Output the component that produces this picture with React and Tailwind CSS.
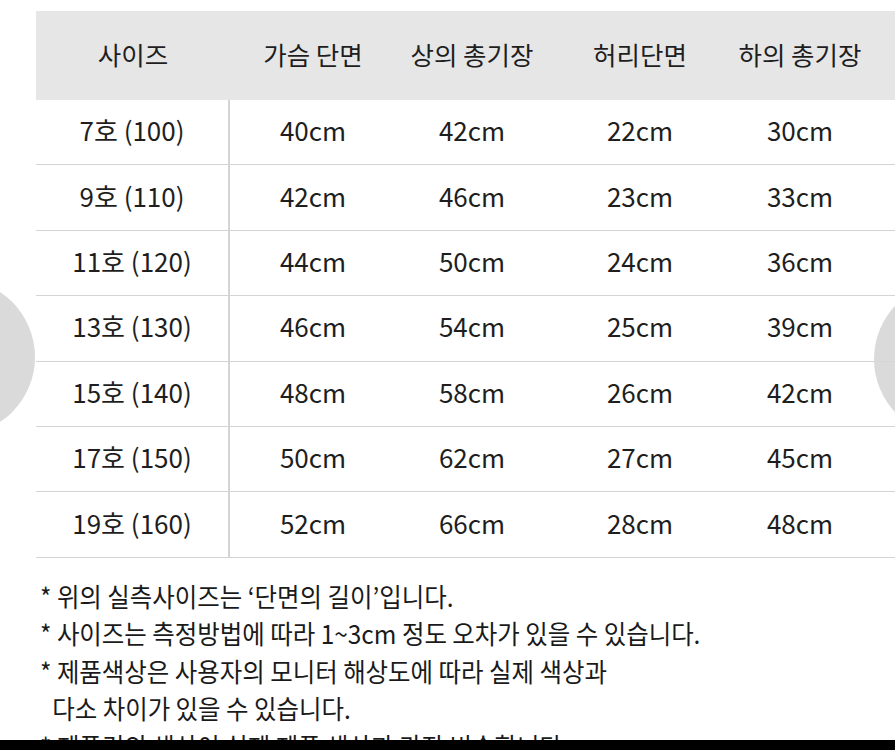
import React from "react";

const headers = ["사이즈", "가슴 단면", "상의 총기장", "허리단면", "하의 총기장"];

const rows = [
  ["7호 (100)", "40cm", "42cm", "22cm", "30cm"],
  ["9호 (110)", "42cm", "46cm", "23cm", "33cm"],
  ["11호 (120)", "44cm", "50cm", "24cm", "36cm"],
  ["13호 (130)", "46cm", "54cm", "25cm", "39cm"],
  ["15호 (140)", "48cm", "58cm", "26cm", "42cm"],
  ["17호 (150)", "50cm", "62cm", "27cm", "45cm"],
  ["19호 (160)", "52cm", "66cm", "28cm", "48cm"],
];

const notes = [
  { text: "* 위의 실측사이즈는 ‘단면의 길이’입니다.", indent: false },
  { text: "* 사이즈는 측정방법에 따라 1~3cm 정도 오차가 있을 수 있습니다.", indent: false },
  { text: "* 제품색상은 사용자의 모니터 해상도에 따라 실제 색상과", indent: false },
  { text: "다소 차이가 있을 수 있습니다.", indent: true },
  { text: "* 제품컷의 색상이 실제 제품 색상과 가장 비슷합니다.", indent: false },
];

const cols = "grid grid-cols-[194px_166px_152px_184px_136px_1fr]";

const App = () => {
  return (
    <div
      className="relative w-[895px] h-[750px] overflow-hidden bg-white text-[#1e1e1e]"
      style={{ fontFamily: '"Noto Sans CJK KR", "Noto Sans", sans-serif' }}
    >
      <div className="h-[740px] overflow-hidden pt-[11px] pl-[36px]">
        {/* size table */}
        <div className={`${cols} h-[89px] bg-[#e6e6e6] items-center text-[25.5px]`}>
          {headers.map((h) => (
            <div key={h} className="text-center whitespace-nowrap pb-[2px]">
              {h}
            </div>
          ))}
          <div />
        </div>

        {rows.map((row) => (
          <div
            key={row[0]}
            className={`${cols} h-[65.4px] border-b border-[#d4d4d4] items-stretch text-[26px]`}
          >
            {row.map((cell, i) => (
              <div
                key={i}
                className={`flex items-center justify-center whitespace-nowrap pb-[5px] ${
                  i === 0 ? "border-r-2 border-[#d4d4d4]" : ""
                }`}
              >
                {cell}
              </div>
            ))}
            <div />
          </div>
        ))}

        {/* notes */}
        <div className="mt-[19px] -ml-[34px] pl-[38px] text-[26px] leading-[37.5px] text-[#1a1a1a]">
          {notes.map((n) => (
            <div
              key={n.text}
              className={`whitespace-nowrap origin-left scale-x-[0.94] ${n.indent ? "pl-[13px]" : ""}`}
            >
              {n.text}
            </div>
          ))}
        </div>
      </div>

      <div className="h-[10px] bg-black" />

      {/* carousel arrows */}
      <div className="absolute left-[-121px] top-[279px] w-[156px] h-[156px] rounded-full bg-[#d6d6d6]/90" />
      <div className="absolute left-[874px] top-[281px] w-[156px] h-[156px] rounded-full bg-[#d6d6d6]/90" />
    </div>
  );
};

export default App;
